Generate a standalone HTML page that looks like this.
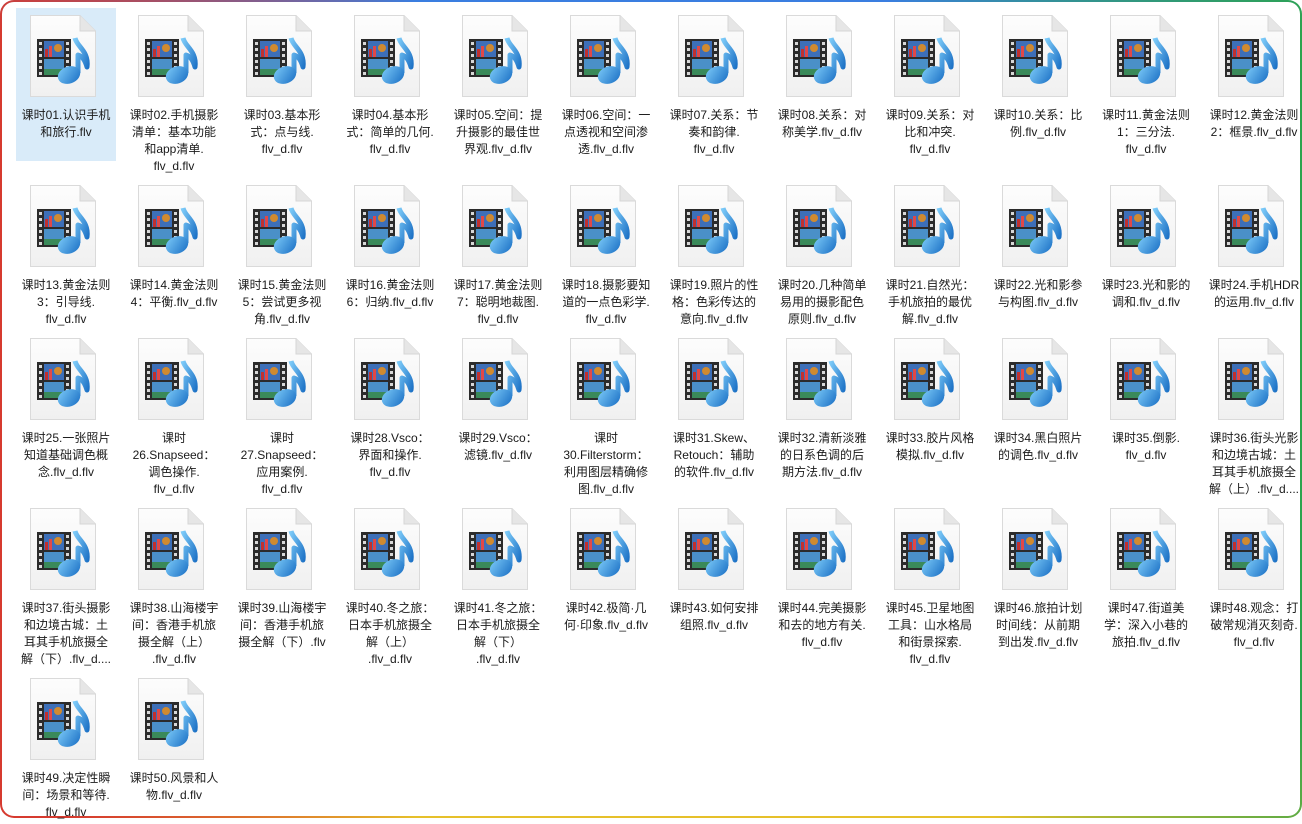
<!DOCTYPE html>
<html><head><meta charset="utf-8"><style>
html,body{margin:0;padding:0;background:#fff;}
body{width:1302px;height:818px;overflow:hidden;position:relative;font-family:"Liberation Sans","Noto Sans CJK SC",sans-serif;}
.frame{position:absolute;left:0;top:0;width:1302px;height:818px;box-sizing:border-box;border-radius:14px;padding:2px;
background:conic-gradient(from 0deg,#3a7ee0 0deg,#3a7ee0 30deg,#2da44e 60deg,#2da44e 115deg,#e6c02a 140deg,#e6c02a 210deg,#d63a2f 235deg,#d63a2f 300deg,#3a7ee0 330deg);}
.inner{width:100%;height:100%;background:#fff;border-radius:12px;}
.grid{position:absolute;left:16px;top:8px;width:1296px;display:flex;flex-wrap:wrap;align-items:flex-start;}
.c{width:100px;margin-right:8px;position:relative;padding-top:99px;padding-bottom:3px;text-align:center;font-size:12px;line-height:17px;color:#1a1a1a;white-space:nowrap;}
.c svg{position:absolute;left:14px;top:7px;}
.sel{background:#d9ebf9;}
</style></head><body>
<div class="frame"><div class="inner"></div></div>
<svg width="0" height="0" style="position:absolute">
<defs>
<linearGradient id="pg" x1="0" y1="0" x2="0" y2="1"><stop offset="0" stop-color="#fdfdfd"/><stop offset="1" stop-color="#f0f0f0"/></linearGradient>
<linearGradient id="nt" x1="0" y1="0" x2="1" y2="1"><stop offset="0" stop-color="#7ccaf8"/><stop offset="1" stop-color="#1a6fc4"/></linearGradient>
<symbol id="ic" viewBox="0 0 66 82">
<path d="M0.5 0.5H50L65.5 16V81.5H0.5Z" fill="url(#pg)" stroke="#dadada"/>
<path d="M50 0.5V16H65.5" fill="#e6e6e6" stroke="#d6d6d6"/>
<rect x="7" y="24" width="34" height="38" fill="#2b2b2b"/>
<g fill="#d8d8d8"><rect x="9" y="27" width="3" height="3"/><rect x="9" y="33" width="3" height="3"/><rect x="9" y="39" width="3" height="3"/><rect x="9" y="45" width="3" height="3"/><rect x="9" y="51" width="3" height="3"/><rect x="9" y="57" width="3" height="3"/>
<rect x="36" y="27" width="3" height="3"/><rect x="36" y="33" width="3" height="3"/><rect x="36" y="39" width="3" height="3"/><rect x="36" y="45" width="3" height="3"/><rect x="36" y="51" width="3" height="3"/><rect x="36" y="57" width="3" height="3"/></g>
<rect x="14" y="26" width="20" height="16" fill="#3d6fb8"/>
<rect x="15" y="34" width="3" height="8" fill="#c03030"/><rect x="19" y="31" width="3" height="11" fill="#e04848"/>
<circle cx="28" cy="33" r="4" fill="#d08a30"/>
<rect x="14" y="44" width="20" height="16" fill="#4a90c8"/>
<rect x="14" y="54" width="20" height="6" fill="#3a8a5a"/>
<path d="M45 23 C47 32 59 36 57 52 C55 45 52 41 48 40 L48 58" fill="none" stroke="url(#nt)" stroke-width="5" stroke-linejoin="round"/>
<ellipse cx="39" cy="60" rx="11.5" ry="8.5" fill="url(#nt)" transform="rotate(-20 39 60)"/>
</symbol>
</defs></svg>
<div class="grid">
<div class="c sel"><svg width="66" height="82"><use href="#ic"/></svg>课时01.认识手机<br>和旅行.flv<br><br></div>
<div class="c"><svg width="66" height="82"><use href="#ic"/></svg>课时02.手机摄影<br>清单：基本功能<br>和app清单.<br>flv_d.flv</div>
<div class="c"><svg width="66" height="82"><use href="#ic"/></svg>课时03.基本形<br>式：点与线.<br>flv_d.flv</div>
<div class="c"><svg width="66" height="82"><use href="#ic"/></svg>课时04.基本形<br>式：简单的几何.<br>flv_d.flv</div>
<div class="c"><svg width="66" height="82"><use href="#ic"/></svg>课时05.空间：提<br>升摄影的最佳世<br>界观.flv_d.flv</div>
<div class="c"><svg width="66" height="82"><use href="#ic"/></svg>课时06.空间：一<br>点透视和空间渗<br>透.flv_d.flv</div>
<div class="c"><svg width="66" height="82"><use href="#ic"/></svg>课时07.关系：节<br>奏和韵律.<br>flv_d.flv</div>
<div class="c"><svg width="66" height="82"><use href="#ic"/></svg>课时08.关系：对<br>称美学.flv_d.flv</div>
<div class="c"><svg width="66" height="82"><use href="#ic"/></svg>课时09.关系：对<br>比和冲突.<br>flv_d.flv</div>
<div class="c"><svg width="66" height="82"><use href="#ic"/></svg>课时10.关系：比<br>例.flv_d.flv</div>
<div class="c"><svg width="66" height="82"><use href="#ic"/></svg>课时11.黄金法则<br>1：三分法.<br>flv_d.flv</div>
<div class="c"><svg width="66" height="82"><use href="#ic"/></svg>课时12.黄金法则<br>2：框景.flv_d.flv</div>

<div class="c"><svg width="66" height="82"><use href="#ic"/></svg>课时13.黄金法则<br>3：引导线.<br>flv_d.flv</div>
<div class="c"><svg width="66" height="82"><use href="#ic"/></svg>课时14.黄金法则<br>4：平衡.flv_d.flv</div>
<div class="c"><svg width="66" height="82"><use href="#ic"/></svg>课时15.黄金法则<br>5：尝试更多视<br>角.flv_d.flv</div>
<div class="c"><svg width="66" height="82"><use href="#ic"/></svg>课时16.黄金法则<br>6：归纳.flv_d.flv</div>
<div class="c"><svg width="66" height="82"><use href="#ic"/></svg>课时17.黄金法则<br>7：聪明地裁图.<br>flv_d.flv</div>
<div class="c"><svg width="66" height="82"><use href="#ic"/></svg>课时18.摄影要知<br>道的一点色彩学.<br>flv_d.flv</div>
<div class="c"><svg width="66" height="82"><use href="#ic"/></svg>课时19.照片的性<br>格：色彩传达的<br>意向.flv_d.flv</div>
<div class="c"><svg width="66" height="82"><use href="#ic"/></svg>课时20.几种简单<br>易用的摄影配色<br>原则.flv_d.flv</div>
<div class="c"><svg width="66" height="82"><use href="#ic"/></svg>课时21.自然光：<br>手机旅拍的最优<br>解.flv_d.flv</div>
<div class="c"><svg width="66" height="82"><use href="#ic"/></svg>课时22.光和影参<br>与构图.flv_d.flv</div>
<div class="c"><svg width="66" height="82"><use href="#ic"/></svg>课时23.光和影的<br>调和.flv_d.flv</div>
<div class="c"><svg width="66" height="82"><use href="#ic"/></svg>课时24.手机HDR<br>的运用.flv_d.flv</div>

<div class="c"><svg width="66" height="82"><use href="#ic"/></svg>课时25.一张照片<br>知道基础调色概<br>念.flv_d.flv</div>
<div class="c"><svg width="66" height="82"><use href="#ic"/></svg>课时<br>26.Snapseed：<br>调色操作.<br>flv_d.flv</div>
<div class="c"><svg width="66" height="82"><use href="#ic"/></svg>课时<br>27.Snapseed：<br>应用案例.<br>flv_d.flv</div>
<div class="c"><svg width="66" height="82"><use href="#ic"/></svg>课时28.Vsco：<br>界面和操作.<br>flv_d.flv</div>
<div class="c"><svg width="66" height="82"><use href="#ic"/></svg>课时29.Vsco：<br>滤镜.flv_d.flv</div>
<div class="c"><svg width="66" height="82"><use href="#ic"/></svg>课时<br>30.Filterstorm：<br>利用图层精确修<br>图.flv_d.flv</div>
<div class="c"><svg width="66" height="82"><use href="#ic"/></svg>课时31.Skew、<br>Retouch：辅助<br>的软件.flv_d.flv</div>
<div class="c"><svg width="66" height="82"><use href="#ic"/></svg>课时32.清新淡雅<br>的日系色调的后<br>期方法.flv_d.flv</div>
<div class="c"><svg width="66" height="82"><use href="#ic"/></svg>课时33.胶片风格<br>模拟.flv_d.flv</div>
<div class="c"><svg width="66" height="82"><use href="#ic"/></svg>课时34.黑白照片<br>的调色.flv_d.flv</div>
<div class="c"><svg width="66" height="82"><use href="#ic"/></svg>课时35.倒影.<br>flv_d.flv</div>
<div class="c"><svg width="66" height="82"><use href="#ic"/></svg>课时36.街头光影<br>和边境古城：土<br>耳其手机旅摄全<br>解（上）.flv_d....</div>

<div class="c"><svg width="66" height="82"><use href="#ic"/></svg>课时37.街头摄影<br>和边境古城：土<br>耳其手机旅摄全<br>解（下）.flv_d....</div>
<div class="c"><svg width="66" height="82"><use href="#ic"/></svg>课时38.山海楼宇<br>间：香港手机旅<br>摄全解（上）<br>.flv_d.flv</div>
<div class="c"><svg width="66" height="82"><use href="#ic"/></svg>课时39.山海楼宇<br>间：香港手机旅<br>摄全解（下）.flv</div>
<div class="c"><svg width="66" height="82"><use href="#ic"/></svg>课时40.冬之旅：<br>日本手机旅摄全<br>解（上）<br>.flv_d.flv</div>
<div class="c"><svg width="66" height="82"><use href="#ic"/></svg>课时41.冬之旅：<br>日本手机旅摄全<br>解（下）<br>.flv_d.flv</div>
<div class="c"><svg width="66" height="82"><use href="#ic"/></svg>课时42.极简·几<br>何·印象.flv_d.flv</div>
<div class="c"><svg width="66" height="82"><use href="#ic"/></svg>课时43.如何安排<br>组照.flv_d.flv</div>
<div class="c"><svg width="66" height="82"><use href="#ic"/></svg>课时44.完美摄影<br>和去的地方有关.<br>flv_d.flv</div>
<div class="c"><svg width="66" height="82"><use href="#ic"/></svg>课时45.卫星地图<br>工具：山水格局<br>和街景探索.<br>flv_d.flv</div>
<div class="c"><svg width="66" height="82"><use href="#ic"/></svg>课时46.旅拍计划<br>时间线：从前期<br>到出发.flv_d.flv</div>
<div class="c"><svg width="66" height="82"><use href="#ic"/></svg>课时47.街道美<br>学：深入小巷的<br>旅拍.flv_d.flv</div>
<div class="c"><svg width="66" height="82"><use href="#ic"/></svg>课时48.观念：打<br>破常规消灭刻奇.<br>flv_d.flv</div>

<div class="c"><svg width="66" height="82"><use href="#ic"/></svg>课时49.决定性瞬<br>间：场景和等待.<br>flv_d.flv</div>
<div class="c"><svg width="66" height="82"><use href="#ic"/></svg>课时50.风景和人<br>物.flv_d.flv</div>
</div>
</body></html>
